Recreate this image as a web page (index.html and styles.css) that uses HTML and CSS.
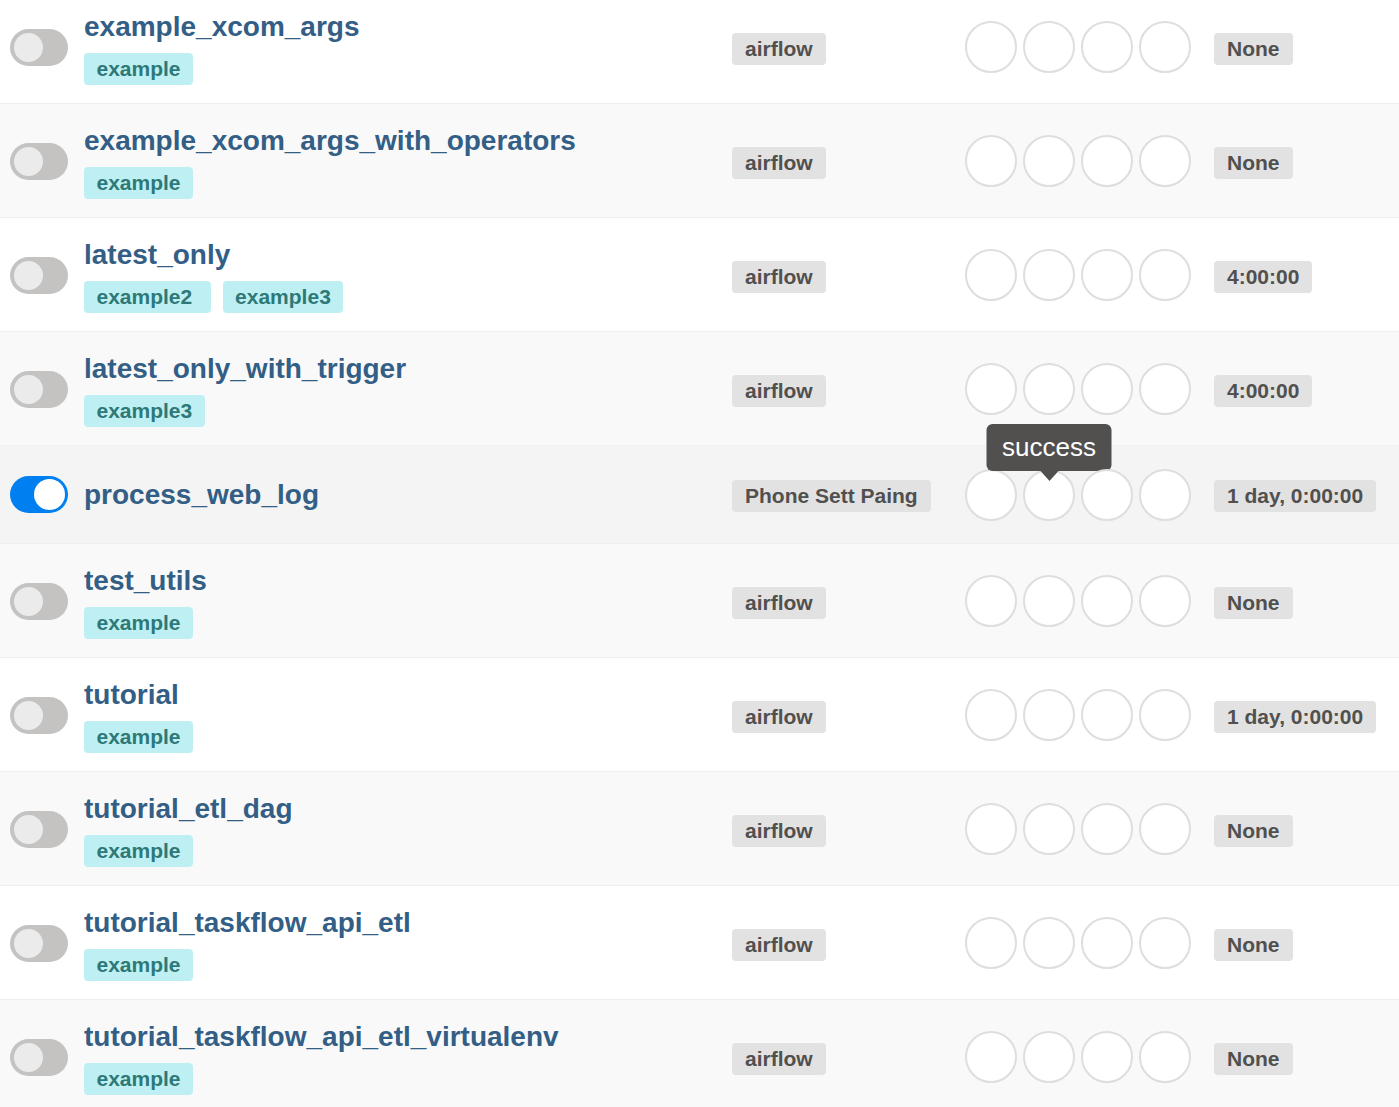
FILE: index.html
```html
<!DOCTYPE html>
<html lang="en">
<head>
<meta charset="utf-8">
<title>DAGs</title>
<link rel="stylesheet" href="styles.css">
</head>
<body>
<div class="table">
  <div class="row">
    <div class="c-toggle"><span class="toggle"></span></div>
    <div class="c-name"><a class="dag-name">example_xcom_args</a><div class="tags"><span class="tag">example</span></div></div>
    <div class="c-owner"><span class="badge">airflow</span></div>
    <div class="c-runs"><span class="run"></span><span class="run"></span><span class="run"></span><span class="run"></span></div>
    <div class="c-sched"><span class="badge">None</span></div>
  </div>
  <div class="row">
    <div class="c-toggle"><span class="toggle"></span></div>
    <div class="c-name"><a class="dag-name">example_xcom_args_with_operators</a><div class="tags"><span class="tag">example</span></div></div>
    <div class="c-owner"><span class="badge">airflow</span></div>
    <div class="c-runs"><span class="run"></span><span class="run"></span><span class="run"></span><span class="run"></span></div>
    <div class="c-sched"><span class="badge">None</span></div>
  </div>
  <div class="row">
    <div class="c-toggle"><span class="toggle"></span></div>
    <div class="c-name"><a class="dag-name">latest_only</a><div class="tags"><span class="tag">example2&nbsp;</span><span class="tag">example3</span></div></div>
    <div class="c-owner"><span class="badge">airflow</span></div>
    <div class="c-runs"><span class="run"></span><span class="run"></span><span class="run"></span><span class="run"></span></div>
    <div class="c-sched"><span class="badge">4:00:00</span></div>
  </div>
  <div class="row">
    <div class="c-toggle"><span class="toggle"></span></div>
    <div class="c-name"><a class="dag-name">latest_only_with_trigger</a><div class="tags"><span class="tag">example3</span></div></div>
    <div class="c-owner"><span class="badge">airflow</span></div>
    <div class="c-runs"><span class="run"></span><span class="run"></span><span class="run"></span><span class="run"></span></div>
    <div class="c-sched"><span class="badge">4:00:00</span></div>
  </div>
  <div class="row row-single row-hover">
    <div class="c-toggle"><span class="toggle on"></span></div>
    <div class="c-name"><a class="dag-name">process_web_log</a></div>
    <div class="c-owner"><span class="badge">Phone Sett Paing</span></div>
    <div class="c-runs"><span class="run"></span><span class="run has-tip"><span class="tooltip">success</span></span><span class="run"></span><span class="run"></span></div>
    <div class="c-sched"><span class="badge">1 day, 0:00:00</span></div>
  </div>
  <div class="row">
    <div class="c-toggle"><span class="toggle"></span></div>
    <div class="c-name"><a class="dag-name">test_utils</a><div class="tags"><span class="tag">example</span></div></div>
    <div class="c-owner"><span class="badge">airflow</span></div>
    <div class="c-runs"><span class="run"></span><span class="run"></span><span class="run"></span><span class="run"></span></div>
    <div class="c-sched"><span class="badge">None</span></div>
  </div>
  <div class="row">
    <div class="c-toggle"><span class="toggle"></span></div>
    <div class="c-name"><a class="dag-name">tutorial</a><div class="tags"><span class="tag">example</span></div></div>
    <div class="c-owner"><span class="badge">airflow</span></div>
    <div class="c-runs"><span class="run"></span><span class="run"></span><span class="run"></span><span class="run"></span></div>
    <div class="c-sched"><span class="badge">1 day, 0:00:00</span></div>
  </div>
  <div class="row">
    <div class="c-toggle"><span class="toggle"></span></div>
    <div class="c-name"><a class="dag-name">tutorial_etl_dag</a><div class="tags"><span class="tag">example</span></div></div>
    <div class="c-owner"><span class="badge">airflow</span></div>
    <div class="c-runs"><span class="run"></span><span class="run"></span><span class="run"></span><span class="run"></span></div>
    <div class="c-sched"><span class="badge">None</span></div>
  </div>
  <div class="row">
    <div class="c-toggle"><span class="toggle"></span></div>
    <div class="c-name"><a class="dag-name">tutorial_taskflow_api_etl</a><div class="tags"><span class="tag">example</span></div></div>
    <div class="c-owner"><span class="badge">airflow</span></div>
    <div class="c-runs"><span class="run"></span><span class="run"></span><span class="run"></span><span class="run"></span></div>
    <div class="c-sched"><span class="badge">None</span></div>
  </div>
  <div class="row">
    <div class="c-toggle"><span class="toggle"></span></div>
    <div class="c-name"><a class="dag-name">tutorial_taskflow_api_etl_virtualenv</a><div class="tags"><span class="tag">example</span></div></div>
    <div class="c-owner"><span class="badge">airflow</span></div>
    <div class="c-runs"><span class="run"></span><span class="run"></span><span class="run"></span><span class="run"></span></div>
    <div class="c-sched"><span class="badge">None</span></div>
  </div>
</div>
</body>
</html>
```
FILE: styles.css
```css
html, body {
  margin: 0;
  padding: 0;
  background: #ffffff;
  overflow: hidden;
}
body {
  font-family: "Liberation Sans", Arial, sans-serif;
  color: #51504f;
}
.table {
  margin-top: -10px;
}
.row {
  display: grid;
  grid-template-columns: 74px 648px 233px 249px 1fr;
  align-items: center;
  padding: 18px 0 17px 10px;
  border-bottom: 1px solid #efefef;
  background: #ffffff;
  box-sizing: border-box;
  height: 114px;
}
.row:nth-child(even) {
  background: #f9f9f9;
}
.row-single {
  height: 98px;
  padding-top: 0;
  padding-bottom: 0;
}
.row-hover {
  background: #f4f4f4 !important;
  position: relative;
  z-index: 2;
}
.toggle {
  display: block;
  position: relative;
  width: 58px;
  height: 37px;
  border-radius: 19px;
  background: #c4c3c2;
  box-sizing: border-box;
}
.toggle::after {
  content: "";
  position: absolute;
  left: 4px;
  top: 4px;
  width: 29px;
  height: 29px;
  border-radius: 50%;
  background: #ebebeb;
}
.toggle.on {
  background: #0080f0;
}
.toggle.on::after {
  left: auto;
  right: 3px;
  top: 3px;
  width: 31px;
  height: 31px;
  background: #ffffff;
}
.c-name {
  display: flex;
  flex-direction: column;
  align-items: flex-start;
}
.dag-name {
  font-size: 28px;
  line-height: 34px;
  font-weight: bold;
  color: #335e85;
  text-decoration: none;
  white-space: nowrap;
}
.tags {
  display: flex;
  gap: 12px;
  margin-top: 9px;
}
.tag {
  display: inline-flex;
  align-items: center;
  height: 32px;
  padding: 0 12.5px;
  border-radius: 4px;
  background: #bef0f3;
  color: #2e7978;
  font-size: 21px;
  font-weight: bold;
  white-space: pre;
}
.badge {
  display: inline-flex;
  align-items: center;
  height: 32px;
  padding: 0 13px;
  border-radius: 4px;
  background: #e2e2e2;
  color: #51504f;
  font-size: 21px;
  font-weight: bold;
  white-space: nowrap;
}
.c-owner, .c-sched {
  display: flex;
  align-items: center;
  margin-top: 3px;
}
.c-runs {
  display: flex;
  gap: 6px;
  align-items: center;
}
.run {
  display: block;
  position: relative;
  width: 52px;
  height: 52px;
  border: 2px solid #dedede;
  border-radius: 50%;
  background: #ffffff;
  box-sizing: border-box;
}
.tooltip {
  position: absolute;
  bottom: 100%;
  left: 50%;
  transform: translateX(-50%);
  width: 125px;
  height: 47px;
  border-radius: 6px;
  background: #51504f;
  color: #ffffff;
  font-size: 26px;
  line-height: 47px;
  text-align: center;
  font-weight: normal;
}
.tooltip::after {
  content: "";
  position: absolute;
  top: 100%;
  left: 50%;
  margin-left: -9px;
  border-left: 9px solid transparent;
  border-right: 9px solid transparent;
  border-top: 10px solid #51504f;
}
```
